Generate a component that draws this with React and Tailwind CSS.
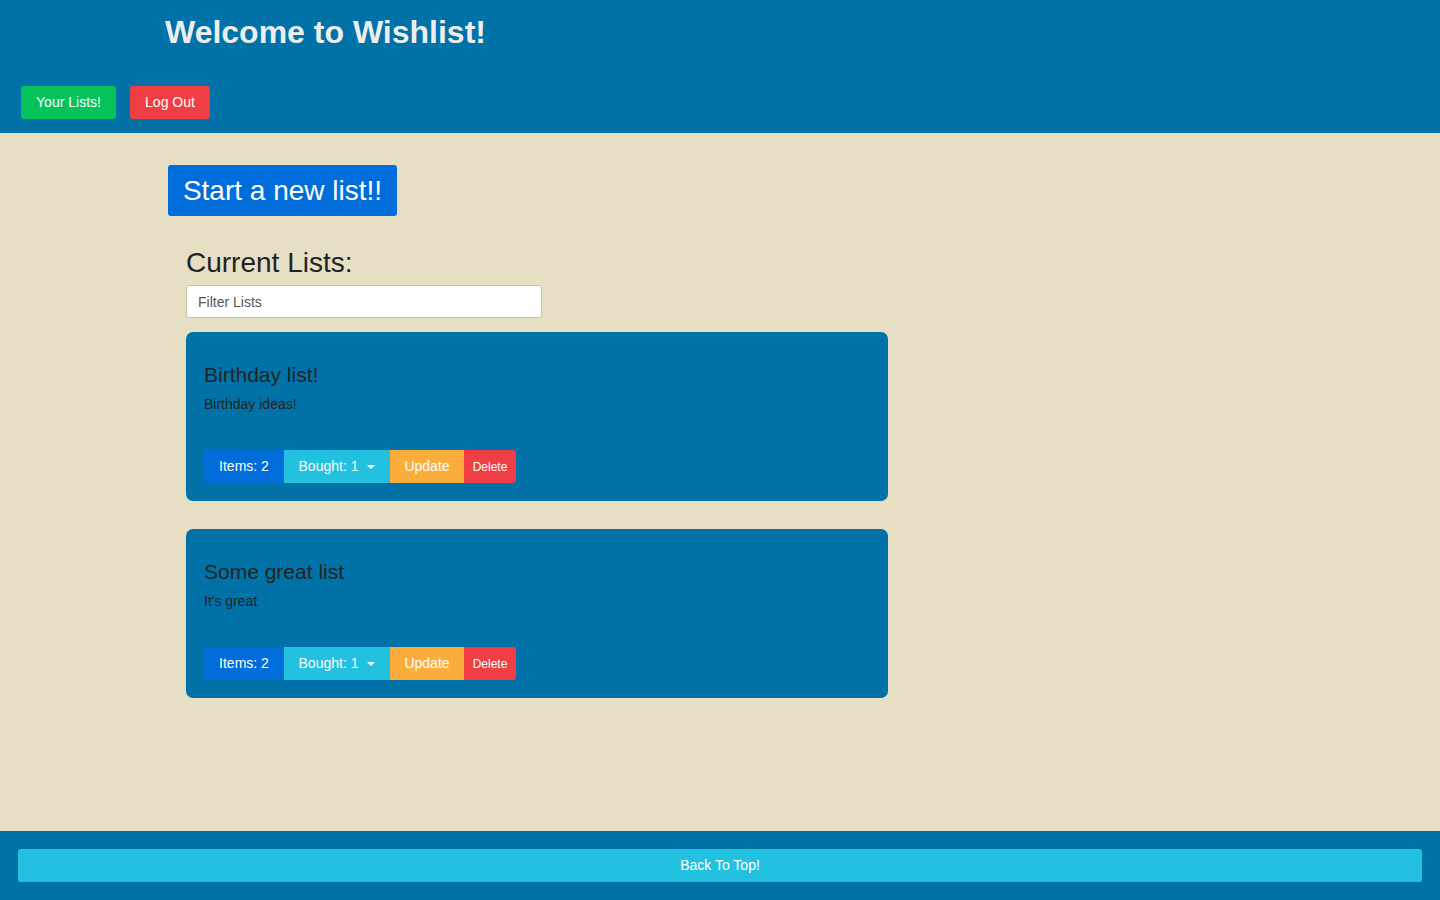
const lists = [
  { id: 1, name: 'Birthday list!', description: 'Birthday ideas!', items: 2, bought: 1 },
  { id: 2, name: 'Some great list', description: "It's great", items: 2, bought: 1 }
];

function ListCard({ list }) {
  return (
    <div className="bg-[#0072a8] rounded-[7px] h-[169px] px-[18px] pt-[30px] flex flex-col">
      <h3 className="text-[21px] leading-[26px] text-[#222]">{list.name}</h3>
      <p className="text-[14px] leading-[20px] mt-[6px] text-[#222]">{list.description}</p>
      <div className="flex mt-auto mb-[18px] h-[33px] text-white text-[14px]">
        <button className="bg-[#006ddb] w-[80px] rounded-l-[3px]">Items: {list.items}</button>
        <button className="bg-[#22c1e0] w-[106px] flex items-center justify-center gap-[9px]">
          Bought: {list.bought}
          <span className="w-0 h-0 border-l-[4px] border-r-[4px] border-t-[4px] border-l-transparent border-r-transparent border-t-white" />
        </button>
        <button className="bg-[#fbad3c] w-[74px]">Update</button>
        <button className="bg-[#ef3f45] w-[52px] text-[12px] rounded-r-[3px]">Delete</button>
      </div>
    </div>
  );
}

export default function App() {
  return (
    <div className="min-h-screen flex flex-col bg-[#e6dfc4] font-['Liberation_Sans',Arial,sans-serif]">
      <header className="bg-[#0072a8] h-[133px] flex flex-col">
        <h1 className="text-[32px] font-bold text-[#eeeeee] leading-[36px] mt-[14px] ml-[165px]">Welcome to Wishlist!</h1>
        <div className="flex gap-[14px] mt-[36px] ml-[21px]">
          <button className="bg-[#05c25a] text-white text-[14px] h-[33px] w-[95px] rounded-[3px]">Your Lists!</button>
          <button className="bg-[#ef3f45] text-white text-[14px] h-[33px] w-[80px] rounded-[3px]">Log Out</button>
        </div>
      </header>

      <main className="flex-1 pl-[168px] pt-[32px]">
        <button className="bg-[#006ddb] text-white text-[28px] h-[51px] w-[229px] rounded-[3px]">Start a new list!!</button>
        <div className="ml-[18px] mt-[30px] w-[702px]">
          <h2 className="text-[28px] leading-[34px] text-[#222]">Current Lists:</h2>
          <input
            type="text"
            placeholder="Filter Lists"
            className="mt-[5px] w-[356px] h-[33px] bg-white border border-[#c8bfa5] rounded-[3px] px-[11px] text-[14px] placeholder:text-[#555] outline-none"
          />
          <div className="flex flex-col gap-[28px] mt-[14px]">
            {lists.map(list => (
              <ListCard key={list.id} list={list} />
            ))}
          </div>
        </div>
      </main>

      <footer className="bg-[#0072a8] h-[69px] px-[18px] pt-[18px]">
        <button className="w-full h-[33px] bg-[#22c1e0] text-white text-[14px] rounded-[3px]">Back To Top!</button>
      </footer>
    </div>
  );
}
